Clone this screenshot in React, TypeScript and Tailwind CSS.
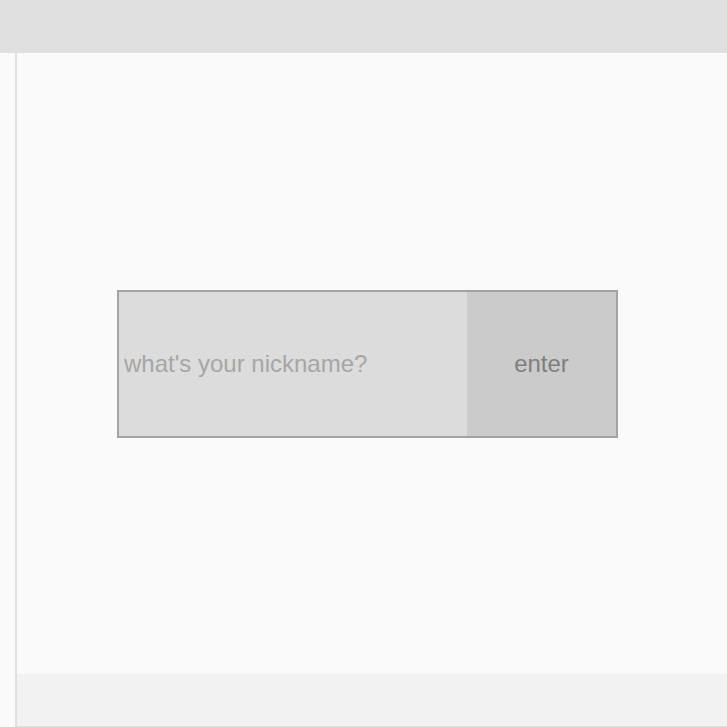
import React from "react";

export default function App() {
  return (
    <div className="flex h-[727px] w-[727px] flex-col overflow-hidden bg-[#fafafa]" style={{ fontFamily: '"Liberation Sans", Arial, sans-serif' }}>
      <div className="h-[53px] shrink-0 bg-[#e0e0e0]" />
      <div className="flex flex-1 min-h-0">
        <div className="w-[17px] shrink-0 border-r-2 border-[#e0e0e0] bg-[#fafafa]" />
        <div className="flex flex-1 flex-col">
          <div className="flex flex-1 items-center bg-[#fafafa] pl-[100px]">
            <div className="flex h-[148px] w-[501px] border-2 border-[#a3a3a3]">
              <input
                className="h-full w-[348px] bg-[#dcdcdc] pl-[5px] text-[24px] text-[#7f7f7f] outline-none placeholder:text-[#a6a6a6]"
                placeholder="what's your nickname?"
              />
              <button className="flex h-full flex-1 items-center justify-center bg-[#cbcbcb] text-[24px] text-[#7f7f7f]">
                enter
              </button>
            </div>
          </div>
          <div className="h-[53px] shrink-0 border-b border-[#e0e0e0] bg-[#f2f2f2]" />
        </div>
      </div>
    </div>
  );
}
